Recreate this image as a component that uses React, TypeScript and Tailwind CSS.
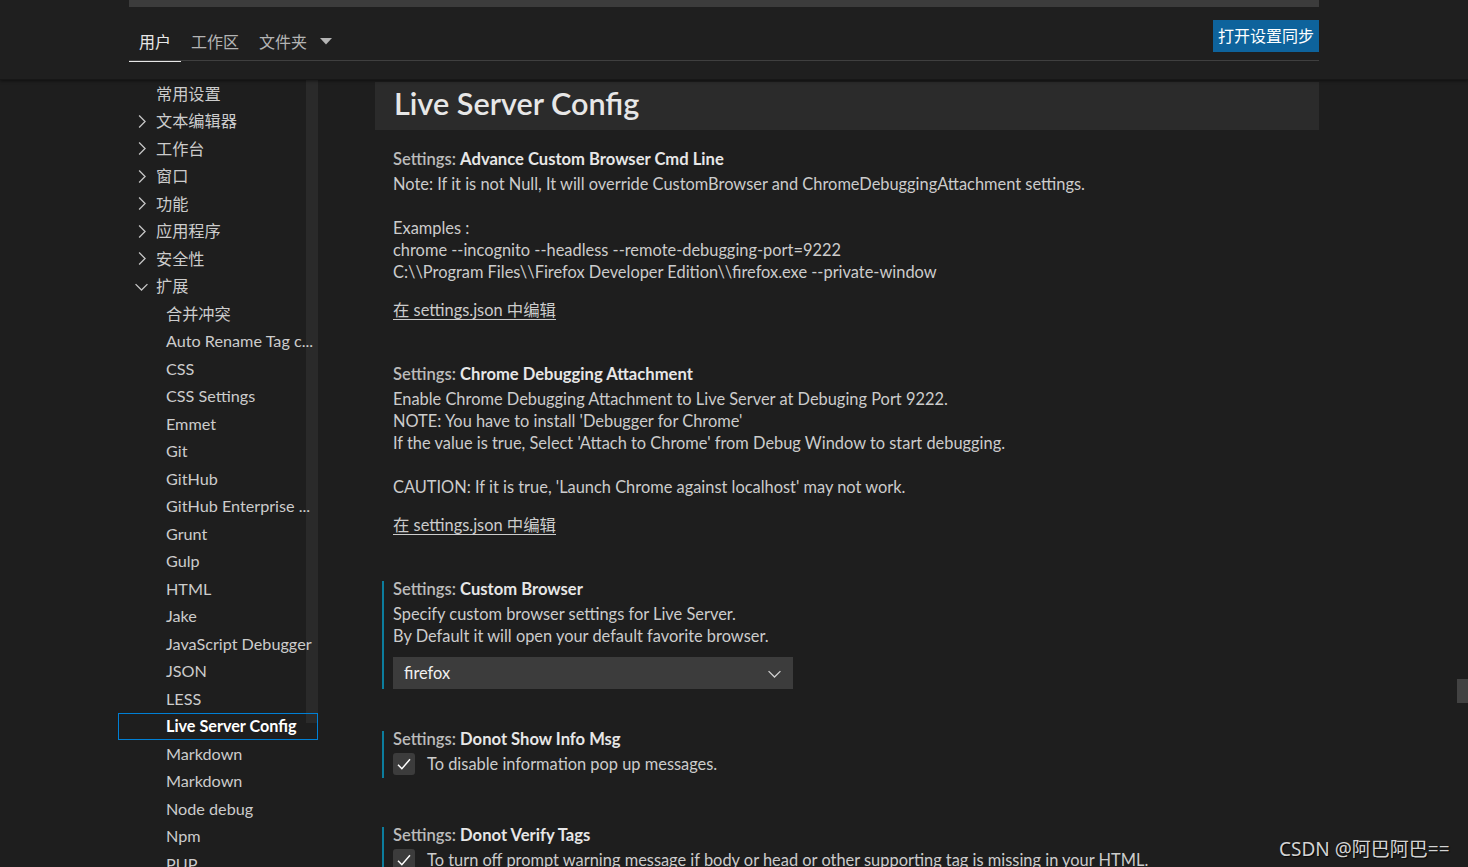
import React from "react";

const FONT = "font-['Lato','Noto_Sans_CJK_SC',sans-serif]";

function ChevronRight() {
  return (
    <svg width="19" height="19" viewBox="0 0 16 16" fill="none" stroke="#c5c5c5" strokeWidth="1.1">
      <polyline points="6,3 11,8 6,13" />
    </svg>
  );
}
function ChevronDown({ color = "#c5c5c5" }: { color?: string }) {
  return (
    <svg width="19" height="19" viewBox="0 0 16 16" fill="none" stroke={color} strokeWidth="1.1">
      <polyline points="3,6 8,11 13,6" />
    </svg>
  );
}
function Check() {
  return (
    <svg width="20" height="20" viewBox="0 0 16 16" fill="none" stroke="#ffffff" strokeWidth="1.2">
      <polyline points="3.2,8.6 6.3,11.8 12.8,4.2" />
    </svg>
  );
}

type Item = { label: string; kind: "plain" | "closed" | "open" | "child"; selected?: boolean };

const items: Item[] = [
  { label: "常用设置", kind: "plain" },
  { label: "文本编辑器", kind: "closed" },
  { label: "工作台", kind: "closed" },
  { label: "窗口", kind: "closed" },
  { label: "功能", kind: "closed" },
  { label: "应用程序", kind: "closed" },
  { label: "安全性", kind: "closed" },
  { label: "扩展", kind: "open" },
  { label: "合并冲突", kind: "child" },
  { label: "Auto Rename Tag c...", kind: "child" },
  { label: "CSS", kind: "child" },
  { label: "CSS Settings", kind: "child" },
  { label: "Emmet", kind: "child" },
  { label: "Git", kind: "child" },
  { label: "GitHub", kind: "child" },
  { label: "GitHub Enterprise ...", kind: "child" },
  { label: "Grunt", kind: "child" },
  { label: "Gulp", kind: "child" },
  { label: "HTML", kind: "child" },
  { label: "Jake", kind: "child" },
  { label: "JavaScript Debugger", kind: "child" },
  { label: "JSON", kind: "child" },
  { label: "LESS", kind: "child" },
  { label: "Live Server Config", kind: "child", selected: true },
  { label: "Markdown", kind: "child" },
  { label: "Markdown", kind: "child" },
  { label: "Node debug", kind: "child" },
  { label: "Npm", kind: "child" },
  { label: "PUP", kind: "child" },
];

function SideItem({ item }: { item: Item }) {
  const base =
    "h-[27.5px] flex items-center whitespace-nowrap overflow-hidden text-[16.2px] " +
    (item.selected ? "border border-[#007fd4] font-bold text-white" : "border border-transparent text-[#cccccc]");
  if (item.kind === "plain") {
    return <div className={base + " pl-[37px]"}>{item.label}</div>;
  }
  if (item.kind === "child") {
    return <div className={base + " pl-[47px]"}>{item.label}</div>;
  }
  return (
    <div className={base + " pl-[13px] gap-[5px]"}>
      {item.kind === "open" ? <ChevronDown /> : <ChevronRight />}
      <span>{item.label}</span>
    </div>
  );
}

function Title({ name }: { name: string }) {
  return (
    <div className="h-[16px] leading-[16px] text-[16.6px] whitespace-nowrap">
      <span className="font-semibold text-[#bbbbbb]">Settings: </span>
      <span className="font-bold text-[#e7e7e7]">{name}</span>
    </div>
  );
}

function Lines({ lines }: { lines: string[] }) {
  return (
    <div className="mt-[6px] text-[16.4px] leading-[22px] text-[#cccccc]">
      {lines.map((l, i) => (
        <div key={i} className="h-[22px] whitespace-nowrap">
          {l}
        </div>
      ))}
    </div>
  );
}

function EditLink() {
  return (
    <div className="mt-[16px] h-[22px] leading-[22px] text-[16.4px] text-[#cccccc]">
      <span className="underline underline-offset-[3px]">在 settings.json 中编辑</span>
    </div>
  );
}

function CheckRow({ text }: { text: string }) {
  return (
    <div className="mt-[6px] flex items-center h-[22px] gap-[12px]">
      <div className="w-[22px] h-[22px] rounded-[3px] bg-[#3c3c3c] flex items-center justify-center">
        <Check />
      </div>
      <span className="text-[16.4px] text-[#cccccc] whitespace-nowrap">{text}</span>
    </div>
  );
}

export default function App() {
  return (
    <div className={"relative w-[1468px] h-[867px] overflow-hidden bg-[#1e1e1e] " + FONT}>
      {/* header */}
      <div className="h-[80px] bg-[#1f1f1f] border-b border-[#171717] shadow-[0_1px_3px_rgba(0,0,0,0.5)] relative z-10">
        <div className="ml-[129px] w-[1190px]">
          <div className="h-[7px] bg-[#3c3c3c]" />
          <div className="mt-[13px] h-[41px] flex items-start justify-between border-b border-[#3f3f3f]">
            <div className="flex items-center h-[41px] text-[16px]">
              <div className="h-[41px] px-[10px] flex items-center text-[#e7e7e7] border-b border-[#e7e7e7] -mb-px pt-[2px]">用户</div>
              <div className="h-[41px] px-[10px] flex items-center text-[#b4b4b4] pt-[2px]">工作区</div>
              <div className="h-[41px] pl-[10px] flex items-center text-[#b4b4b4] pt-[2px] gap-[13px]">
                <span>文件夹</span>
                <svg width="12" height="7" viewBox="0 0 12 7">
                  <polygon points="0,0 12,0 6,6.5" fill="#b4b4b4" />
                </svg>
              </div>
            </div>
            <div className="h-[32px] px-[5px] bg-[#0e639c] text-white text-[16px] flex items-center">打开设置同步</div>
          </div>
        </div>
      </div>

      {/* body */}
      <div className="flex">
        {/* sidebar */}
        <div className="ml-[118px] w-[200px] relative">
          <div className="absolute right-0 top-0 w-[12px] h-[643px] bg-[#2a2a2a]" />
          <div className="relative">
            {items.map((it, i) => (
              <SideItem key={i} item={it} />
            ))}
          </div>
        </div>

        {/* main */}
        <div className="ml-[57px] w-[944px]">
          <div className="mt-[2px] h-[48px] bg-[#2b2b2b] flex items-center pl-[19px] pb-[5px]">
            <span className="text-[30.6px] leading-[36px] text-[#e7e7e7] font-semibold">Live Server Config</span>
          </div>

          <div className="ml-[7px]">
            {/* setting 1 */}
            <div className="mt-[21px] border-l-2 border-transparent pl-[9px]">
              <Title name="Advance Custom Browser Cmd Line" />
              <Lines
                lines={[
                  "Note: If it is not Null, It will override CustomBrowser and ChromeDebuggingAttachment settings.",
                  "",
                  "Examples :",
                  "chrome --incognito --headless --remote-debugging-port=9222",
                  "C:\\\\Program Files\\\\Firefox Developer Edition\\\\firefox.exe --private-window",
                ]}
              />
              <EditLink />
            </div>

            {/* setting 2 */}
            <div className="mt-[45px] border-l-2 border-transparent pl-[9px]">
              <Title name="Chrome Debugging Attachment" />
              <Lines
                lines={[
                  "Enable Chrome Debugging Attachment to Live Server at Debuging Port 9222.",
                  "NOTE: You have to install 'Debugger for Chrome'",
                  "If the value is true, Select 'Attach to Chrome' from Debug Window to start debugging.",
                  "",
                  "CAUTION: If it is true, 'Launch Chrome against localhost' may not work.",
                ]}
              />
              <EditLink />
            </div>

            {/* setting 3 */}
            <div className="mt-[45px] border-l-2 border-[#0c7d9d] pl-[9px]">
              <Title name="Custom Browser" />
              <Lines
                lines={[
                  "Specify custom browser settings for Live Server.",
                  "By Default it will open your default favorite browser.",
                ]}
              />
              <div className="mt-[10px] w-[400px] h-[32px] bg-[#3c3c3c] flex items-center justify-between pl-[11px] pr-[9px]">
                <span className="text-[16.4px] text-[#f0f0f0]">firefox</span>
                <ChevronDown color="#d0d0d0" />
              </div>
            </div>

            {/* setting 4 */}
            <div className="mt-[42px] border-l-2 border-[#0c7d9d] pl-[9px] pb-[3px]">
              <Title name="Donot Show Info Msg" />
              <CheckRow text="To disable information pop up messages." />
            </div>

            {/* setting 5 */}
            <div className="mt-[49px] border-l-2 border-[#0c7d9d] pl-[9px] pb-[3px]">
              <Title name="Donot Verify Tags" />
              <CheckRow text="To turn off prompt warning message if body or head or other supporting tag is missing in your HTML." />
            </div>
          </div>
        </div>
      </div>

      {/* right scrollbar slider */}
      <div className="absolute left-[1457px] top-[679px] w-[11px] h-[24px] bg-[#424242]" />

      {/* watermark */}
      <div className="absolute left-[1279px] top-[835px] text-[19px] text-[#d4d4d4] whitespace-nowrap font-['Noto_Sans','Noto_Sans_CJK_SC',sans-serif] [text-shadow:1px_1px_1px_rgba(0,0,0,0.8)]">
        CSDN @阿巴阿巴==
      </div>
    </div>
  );
}
